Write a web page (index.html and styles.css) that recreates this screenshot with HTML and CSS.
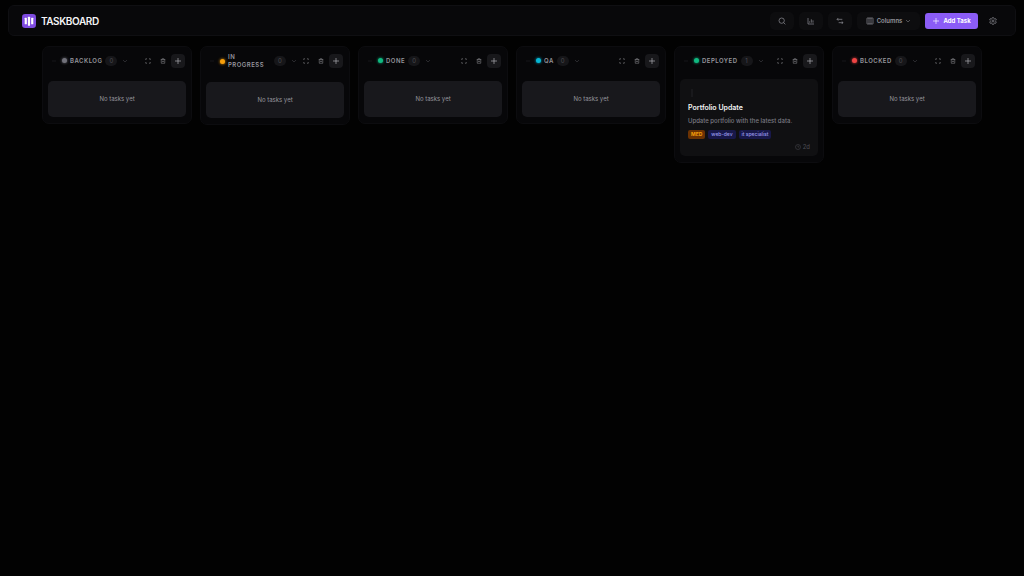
FILE: index.html
```html
<!DOCTYPE html>
<html lang="en">
<head>
  <meta charset="UTF-8" />
  <meta name="viewport" content="width=device-width, initial-scale=1.0" />
  <title>Taskboard</title>
  <link rel="stylesheet" href="styles.css">
</head>
<body>
  <!-- shared icons -->
  <svg class="sprite" aria-hidden="true">
    <symbol id="i-chevron" viewBox="0 0 24 24"><path d="M4 8l8 8 8-8"/></symbol>
    <symbol id="i-plus" viewBox="0 0 24 24"><path d="M12 3v18M3 12h18"/></symbol>
    <symbol id="i-expand" viewBox="0 0 24 24"><path d="M8 3H3v5M16 3h5v5M3 16v5h5M21 16v5h-5"/></symbol>
    <symbol id="i-trash" viewBox="0 0 24 24"><path d="M3 6h18M8 6V3h8v3M5 6v15h14V6M10 11v5M14 11v5"/></symbol>
    <symbol id="i-grip" viewBox="0 0 24 24"><path d="M4 12h16"/></symbol>
  </svg>

  <header class="topbar">
    <div class="brand">
      <svg class="logo" viewBox="0 0 26 26" aria-hidden="true">
        <rect width="26" height="26" rx="6" fill="#7e4be0"/>
        <rect x="5" y="7" width="4" height="12" rx="1" fill="#fff"/>
        <rect x="11" y="5" width="4" height="17" rx="1" fill="#fff"/>
        <rect x="17" y="7" width="4" height="12" rx="1" fill="#fff"/>
      </svg>
      <h1>TASKBOARD</h1>
    </div>
    <div class="toolbar">
      <button class="tool" aria-label="Search"><svg class="icon" viewBox="0 0 24 24"><circle cx="11" cy="11" r="8"/><path d="M22 22l-5-5"/></svg></button>
      <button class="tool" aria-label="Statistics"><svg class="icon" viewBox="0 0 24 24"><path d="M3 3v18h18M8 17v-4M13 17V7M18 17v-7"/></svg></button>
      <button class="tool" aria-label="Filters"><svg class="icon" viewBox="0 0 24 24"><path d="M3 7h16M7 3L3 7l4 4M21 17H8M17 13l4 4-4 4"/></svg></button>
      <button class="tool columns-btn">
        <svg class="icon" viewBox="0 0 24 24"><rect x="3" y="3" width="18" height="18" rx="1"/><path d="M9 3v18M15 3v18"/></svg>
        <span>Columns</span>
        <svg class="icon small" viewBox="0 0 24 24"><use href="#i-chevron"/></svg>
      </button>
      <button class="add-task"><svg class="icon" viewBox="0 0 24 24"><use href="#i-plus"/></svg><span>Add Task</span></button>
      <button class="settings" aria-label="Settings"><svg class="icon" viewBox="0 0 24 24"><path d="M10 2h4l1 3 2 1 3-1 2 4-2 2v2l2 2-2 4-3-1-2 1-1 3h-4l-1-3-2-1-3 1-2-4 2-2v-2L2 9l2-4 3 1 2-1z"/><circle cx="12" cy="12" r="3"/></svg></button>
    </div>
  </header>

  <main class="board">
    <section class="column">
      <div class="column-header">
        <div class="column-title">
          <svg class="grip" viewBox="0 0 24 24"><use href="#i-grip"/></svg>
          <span class="dot gray"></span>
          <h2>BACKLOG</h2>
          <span class="count">0</span>
          <button class="collapse" aria-label="Collapse"><svg class="icon small" viewBox="0 0 24 24"><use href="#i-chevron"/></svg></button>
        </div>
        <div class="column-actions">
          <button aria-label="Expand"><svg class="icon small" viewBox="0 0 24 24"><use href="#i-expand"/></svg></button>
          <button aria-label="Delete column"><svg class="icon small" viewBox="0 0 24 24"><use href="#i-trash"/></svg></button>
          <button class="add" aria-label="Add task"><svg class="icon" viewBox="0 0 24 24"><use href="#i-plus"/></svg></button>
        </div>
      </div>
      <div class="column-body"><p class="empty">No tasks yet</p></div>
    </section>

    <section class="column">
      <div class="column-header">
        <div class="column-title">
          <svg class="grip" viewBox="0 0 24 24"><use href="#i-grip"/></svg>
          <span class="dot orange"></span>
          <h2>IN PROGRESS</h2>
          <span class="count">0</span>
          <button class="collapse" aria-label="Collapse"><svg class="icon small" viewBox="0 0 24 24"><use href="#i-chevron"/></svg></button>
        </div>
        <div class="column-actions">
          <button aria-label="Expand"><svg class="icon small" viewBox="0 0 24 24"><use href="#i-expand"/></svg></button>
          <button aria-label="Delete column"><svg class="icon small" viewBox="0 0 24 24"><use href="#i-trash"/></svg></button>
          <button class="add" aria-label="Add task"><svg class="icon" viewBox="0 0 24 24"><use href="#i-plus"/></svg></button>
        </div>
      </div>
      <div class="column-body"><p class="empty">No tasks yet</p></div>
    </section>

    <section class="column">
      <div class="column-header">
        <div class="column-title">
          <svg class="grip" viewBox="0 0 24 24"><use href="#i-grip"/></svg>
          <span class="dot green"></span>
          <h2>DONE</h2>
          <span class="count">0</span>
          <button class="collapse" aria-label="Collapse"><svg class="icon small" viewBox="0 0 24 24"><use href="#i-chevron"/></svg></button>
        </div>
        <div class="column-actions">
          <button aria-label="Expand"><svg class="icon small" viewBox="0 0 24 24"><use href="#i-expand"/></svg></button>
          <button aria-label="Delete column"><svg class="icon small" viewBox="0 0 24 24"><use href="#i-trash"/></svg></button>
          <button class="add" aria-label="Add task"><svg class="icon" viewBox="0 0 24 24"><use href="#i-plus"/></svg></button>
        </div>
      </div>
      <div class="column-body"><p class="empty">No tasks yet</p></div>
    </section>

    <section class="column">
      <div class="column-header">
        <div class="column-title">
          <svg class="grip" viewBox="0 0 24 24"><use href="#i-grip"/></svg>
          <span class="dot cyan"></span>
          <h2>QA</h2>
          <span class="count">0</span>
          <button class="collapse" aria-label="Collapse"><svg class="icon small" viewBox="0 0 24 24"><use href="#i-chevron"/></svg></button>
        </div>
        <div class="column-actions">
          <button aria-label="Expand"><svg class="icon small" viewBox="0 0 24 24"><use href="#i-expand"/></svg></button>
          <button aria-label="Delete column"><svg class="icon small" viewBox="0 0 24 24"><use href="#i-trash"/></svg></button>
          <button class="add" aria-label="Add task"><svg class="icon" viewBox="0 0 24 24"><use href="#i-plus"/></svg></button>
        </div>
      </div>
      <div class="column-body"><p class="empty">No tasks yet</p></div>
    </section>

    <section class="column">
      <div class="column-header">
        <div class="column-title">
          <svg class="grip" viewBox="0 0 24 24"><use href="#i-grip"/></svg>
          <span class="dot green"></span>
          <h2>DEPLOYED</h2>
          <span class="count">1</span>
          <button class="collapse" aria-label="Collapse"><svg class="icon small" viewBox="0 0 24 24"><use href="#i-chevron"/></svg></button>
        </div>
        <div class="column-actions">
          <button aria-label="Expand"><svg class="icon small" viewBox="0 0 24 24"><use href="#i-expand"/></svg></button>
          <button aria-label="Delete column"><svg class="icon small" viewBox="0 0 24 24"><use href="#i-trash"/></svg></button>
          <button class="add" aria-label="Add task"><svg class="icon" viewBox="0 0 24 24"><use href="#i-plus"/></svg></button>
        </div>
      </div>
      <div class="column-body">
        <article class="card">
          <svg class="card-grip" viewBox="0 0 8 10"><path d="M4 1v8"/></svg>
          <h3>Portfolio Update</h3>
          <p>Update portfolio with the latest data.</p>
          <div class="tags">
            <span class="tag priority">MED</span>
            <span class="tag">web-dev</span>
            <span class="tag">it specialist</span>
          </div>
          <div class="date">
            <svg class="icon small" viewBox="0 0 24 24"><circle cx="12" cy="12" r="10"/><path d="M12 6v6h5"/></svg>
            <span>2d</span>
          </div>
        </article>
      </div>
    </section>

    <section class="column">
      <div class="column-header">
        <div class="column-title">
          <svg class="grip" viewBox="0 0 24 24"><use href="#i-grip"/></svg>
          <span class="dot red"></span>
          <h2>BLOCKED</h2>
          <span class="count">0</span>
          <button class="collapse" aria-label="Collapse"><svg class="icon small" viewBox="0 0 24 24"><use href="#i-chevron"/></svg></button>
        </div>
        <div class="column-actions">
          <button aria-label="Expand"><svg class="icon small" viewBox="0 0 24 24"><use href="#i-expand"/></svg></button>
          <button aria-label="Delete column"><svg class="icon small" viewBox="0 0 24 24"><use href="#i-trash"/></svg></button>
          <button class="add" aria-label="Add task"><svg class="icon" viewBox="0 0 24 24"><use href="#i-plus"/></svg></button>
        </div>
      </div>
      <div class="column-body"><p class="empty">No tasks yet</p></div>
    </section>
  </main>
</body>
</html>
```
FILE: styles.css
```css
* {
  box-sizing: border-box;
  margin: 0;
}
body {
  background: #020202;
  color: #f4f4f5;
  font-family: Inter, sans-serif;
  font-size: 6px;
  line-height: 8px;
  padding: 5px 8px;
}
button {
  display: flex;
  align-items: center;
  justify-content: center;
  border: none;
  padding: 0;
  background: none;
  color: #96969d;
  font: inherit;
  cursor: pointer;
}
.sprite {
  display: none;
}
.icon {
  width: 8px;
  height: 8px;
  flex: none;
  fill: none;
  stroke: currentColor;
  stroke-width: 2;
}
.icon.small {
  width: 6px;
  height: 6px;
}

/* top bar */
.topbar {
  display: flex;
  align-items: center;
  justify-content: space-between;
  height: 31px;
  padding: 0 13px;
  background: #08080a;
  border: 1px solid #0f0f12;
  border-radius: 6px;
}
.brand {
  display: flex;
  align-items: center;
  gap: 5px;
}
.logo {
  width: 14px;
  height: 14px;
}
h1 {
  font-size: 10px;
  line-height: 12px;
  font-weight: 600;
  letter-spacing: -0.04em;
}
.toolbar {
  display: flex;
  align-items: center;
  gap: 5px;
}
.tool {
  width: 24px;
  height: 18px;
  background: #0d0d0f;
  border-radius: 5px;
}
.tool.columns-btn {
  width: 63px;
  gap: 3px;
  font-weight: 600;
}
.add-task {
  width: 53px;
  height: 16px;
  gap: 3px;
  background: #8b5cf6;
  border-radius: 3px;
  color: #fff;
  font-weight: 700;
}
.settings {
  width: 19px;
  height: 18px;
}

/* board */
.board {
  display: flex;
  align-items: flex-start;
  justify-content: center;
  gap: 8px;
  padding-top: 10px;
}
.column {
  width: 150px;
  background: #070709;
  border: 1px solid #0c0c0f;
  border-radius: 7px;
}
.column-header {
  display: flex;
  align-items: center;
  min-height: 26px;
  padding: 6px 6px 5px;
}
.column-title {
  display: flex;
  align-items: center;
  flex: 1;
  min-width: 0;
  gap: 3px;
}
.grip {
  width: 10px;
  height: 6px;
  flex: none;
  stroke: #1c1c20;
  stroke-width: 3;
}
.dot {
  width: 5px;
  height: 5px;
  flex: none;
  border-radius: 50%;
  background: currentColor;
  box-shadow: 0 0 3px currentColor;
}
.gray { color: #71717a; }
.orange { color: #f59e0b; }
.green { color: #10b981; }
.cyan { color: #06b6d4; }
.red { color: #ef4444; }
h2 {
  min-width: 0;
  color: #96969d;
  font-size: 6px;
  line-height: 8px;
  font-weight: 600;
  letter-spacing: 0.08em;
}
.count {
  width: 12px;
  flex: none;
  background: #161619;
  border-radius: 5px;
  color: #4c4c52;
  font-size: 6px;
  line-height: 10px;
  text-align: center;
}
.collapse {
  width: 10px;
  height: 10px;
  flex: none;
  color: #4c4c52;
}
.column-actions {
  display: flex;
  gap: 1px;
}
.column-actions button {
  width: 14px;
  height: 14px;
  border-radius: 4px;
}
.column-actions .add {
  background: #18181b;
  color: #b4b4ba;
}
.column-body {
  padding: 6px 5px;
}
.empty {
  margin-top: 2px;
  padding: 14px 0;
  background: #18181c;
  border-radius: 5px;
  color: #96969d;
  text-align: center;
}

/* task card */
.card {
  display: flex;
  flex-direction: column;
  padding: 9px 8px 5px;
  background: #101012;
  border-radius: 5px;
}
.card-grip {
  width: 8px;
  height: 10px;
  stroke: #222226;
}
h3 {
  margin-top: 5px;
  font-size: 7px;
  line-height: 10px;
  font-weight: 600;
}
.card p {
  margin-top: 4px;
  color: #7a7a82;
  font-weight: 500;
}
.tags {
  display: flex;
  gap: 3px;
  margin-top: 5px;
}
.tag {
  padding: 0 3px;
  background: #18184a;
  border-radius: 2px;
  color: #9a9eec;
  font-size: 5px;
  line-height: 9px;
  font-weight: 500;
}
.tag.priority {
  background: #6b3203;
  color: #f59e0b;
  font-weight: 700;
}
.date {
  display: flex;
  align-items: center;
  justify-content: flex-end;
  gap: 2px;
  margin-top: 4px;
  color: #4c4c52;
}
```
